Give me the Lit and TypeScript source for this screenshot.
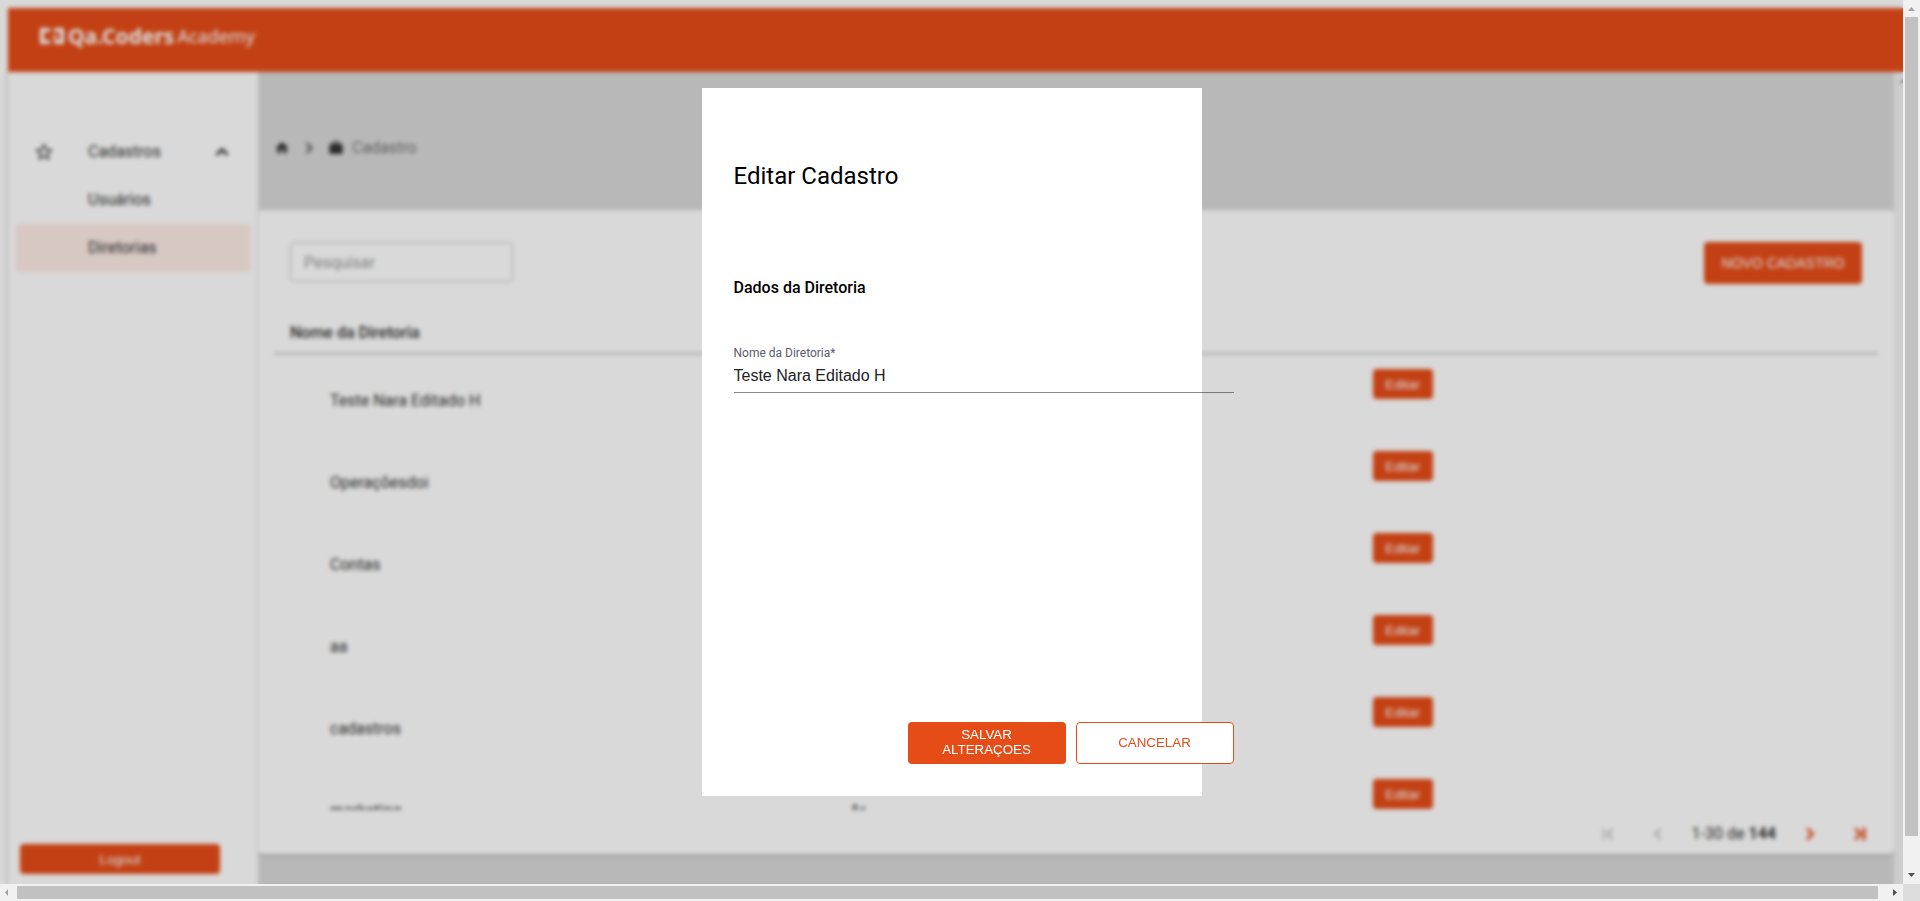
import { LitElement, html, css, svg } from "lit";
import { customElement } from "lit/decorators.js";

const rows = ["Teste Nara Editado H", "Operaçõesdoi", "Contas", "aa", "cadastros", "marketing"];

const icon = (d: string, size = 24, stroke = 0) => html`
  <svg width=${size} height=${size} viewBox="0 0 24 24" aria-hidden="true">
    ${svg`<path d=${d} fill="currentColor" stroke="currentColor" stroke-width=${stroke}></path>`}
  </svg>`;

const STAR = "M22 9.24l-7.19-.62L12 2 9.19 8.63 2 9.24l5.46 4.73L5.82 21 12 17.27 18.18 21l-1.63-7.03L22 9.24zM12 15.4l-3.76 2.27 1-4.28-3.32-2.88 4.38-.38L12 6.1l1.71 4.04 4.38.38-3.32 2.88 1 4.28L12 15.4z";
const UP = "M12 8l-6 6 1.41 1.41L12 10.83l4.59 4.58L18 14z";
const RIGHT = "M10 6L8.59 7.41 13.17 12l-4.58 4.59L10 18l6-6z";
const LEFT = "M15.41 7.41L14 6l-6 6 6 6 1.41-1.41L10.83 12z";
const FIRST = "M17.41 16.59L12.82 12l4.59-4.59L16 6l-6 6 6 6zM7 6h1.500v12H7z";
const LAST = "M6.59 7.41L11.18 12l-4.59 4.59L8 18l6-6-6-6zM15 6h2v12h-2z";
const HOME = "M10 20v-6h4v6h5v-8h3L12 3 2 12h3v8z";
const BAG = "M20 6h-3V4c0-1.11-.89-2-2-2H9c-1.11 0-2 .89-2 2v2H4c-1.11 0-2 .89-2 2v11c0 1.11.89 2 2 2h16c1.11 0 2-.89 2-2V8c0-1.11-.89-2-2-2zm-5 0H9V4h6v2z";

@customElement("app-root")
export class AppRoot extends LitElement {
  static styles = css`
    :host {
      display: grid;
      grid-template: minmax(0, 1fr) 17px / minmax(0, 1fr) 17px;
      height: 100vh;
      overflow: hidden;
      font: 400 16px/24px Roboto, sans-serif;
      color: #333;
    }
    * { box-sizing: border-box; }
    svg { display: block; flex: none; }
    button { font-family: "Liberation Sans", Arial, sans-serif; cursor: pointer; }
    .view { position: relative; overflow: hidden; background: #fff; }
    .app {
      display: grid;
      grid-template: 64px minmax(0, 1fr) / 250px minmax(0, 1fr) 17px;
      height: 100%;
      margin-right: -8px;
      padding: 8px 0 0 8px;
      isolation: isolate;
    }
    .top {
      grid-column: 1 / -1;
      padding: 14px 31px;
      background: #e64c18;
      color: #fff;
      z-index: 1;
    }
    .brand { display: flex; align-items: center; gap: 3px; font: 700 21px/28px "Noto Sans", sans-serif; }
    .brand-sub { font-size: 18px; font-weight: 400; }
    .side {
      display: flex;
      flex-direction: column;
      padding: 56px 8px 10px;
      box-shadow: 0 0 4px rgba(0, 0, 0, 0.35);
      background: #fff;
    }
    .nav { display: flex; flex-direction: column; flex: 1; }
    .nav-item {
      display: grid;
      grid-template-columns: 54px 1fr 24px;
      align-items: center;
      height: 48px;
      padding: 0 16px 0 17px;
      border-radius: 4px;
      color: inherit;
      text-decoration: none;
    }
    .nav-text { grid-column: 2; padding-left: 1px; }
    .active { background: #fdebe6; }
    .solid {
      border: 0;
      border-radius: 4px;
      background: #e64c18;
      color: #fff;
    }
    .logout { width: 200px; height: 30px; margin-left: 4px; }
    .main { display: flex; flex-direction: column; background: #d9d9d9; min-width: 0; z-index: 1; }
    .crumbs {
      display: flex;
      align-items: center;
      height: 138px;
      padding: 14px 16px 0;
      gap: 8px;
      color: #757575;
    }
    .crumbs svg { color: #333; }
    .card {
      flex: 1;
      min-height: 0;
      display: flex;
      flex-direction: column;
      padding: 32px 16px 0;
      background: #fff;
      border-radius: 4px;
      margin-bottom: 30px;
      box-shadow: 0 1px 3px rgba(0, 0, 0, 0.25);
    }
    .tools { display: flex; justify-content: space-between; padding: 0 16px; }
    .search {
      width: 223px;
      height: 40px;
      padding: 0 13px;
      border: 1px solid #c4c4c4;
      border-radius: 4px;
      font: inherit;
    }
    .search::placeholder { color: #999; opacity: 1; }
    .new { width: 158px; height: 42px; font-size: 14px; }
    .table-box { flex: 1; min-height: 0; overflow: hidden; margin-top: 28px; }
    table { width: 100%; border-collapse: separate; border-spacing: 0; table-layout: fixed; }
    th { height: 43px; padding: 2px 16px 0; text-align: left; font-weight: 500; border-bottom: 3px solid #d9d9d9; }
    td { height: 82px; padding: 14px 0 0; vertical-align: top; }
    td.name { padding: 34px 0 0 56px; }
    td.code { padding: 34px 0 0 24px; }
    .edit { display: block; width: 60px; height: 30px; }
    .pager { display: flex; align-items: center; justify-content: flex-end; height: 44px; padding: 4px 6px 0 0; gap: 22px; }
    .steps { display: flex; gap: 26px; }
    .step { padding: 0; border: 0; background: none; color: #e64c18; }
    .step:disabled { color: #bbb; }
    .inner-bar { background: #f1f1f1; z-index: 1; }
    .veil {
      position: absolute;
      inset: 0;
      z-index: 2;
      display: flex;
      justify-content: center;
      align-items: center;
      background: rgba(0, 0, 0, 0.15);
      backdrop-filter: blur(2px);
    }
    .dialog {
      display: flex;
      flex-direction: column;
      width: 500px;
      height: 708px;
      padding: 72px 32px 32px;
      background: #fff;
      color: #000;
    }
    h1 { margin: 0; font-size: 24px; line-height: 32px; font-weight: 400; }
    h2 { margin: 84px 0 0; font-size: 16px; line-height: 24px; font-weight: 500; }
    .field { width: 500px; margin-top: 44px; }
    .field label { display: block; font-size: 12px; line-height: 18px; color: #5c5b6e; }
    .field input {
      display: block;
      width: 100%;
      height: 31px;
      padding: 0 0 2px;
      border: 0;
      border-bottom: 1px solid rgba(0, 0, 0, 0.45);
      background: none;
      outline: 0;
      font: 16px "Liberation Sans", Arial, sans-serif;
      color: #222;
    }
    .actions { display: flex; justify-content: flex-end; gap: 10px; width: 500px; margin-top: auto; }
    .action { width: 158px; height: 42px; padding: 0 24px 2px; border-radius: 4px; line-height: 15px; text-transform: uppercase; }
    .ghost { border: 1px solid #e64c18; background: #fff; color: #e64c18; }
    .bar { display: flex; align-items: center; justify-content: space-between; background: #f1f1f1; color: #505050; }
    .bar-v { flex-direction: column; }
    .thumb { background: #c1c1c1; flex: none; }
    .bar-v .thumb { width: 13px; height: calc(100% - 65px); margin-bottom: auto; }
    .bar-h .thumb { height: 13px; width: calc(100% - 42px); margin-right: auto; }
    .corner { background: #dcdcdc; }
    .dim { color: #a3a3a3; }
  `;

  private arrow(d: string, dim = false) {
    return html`<svg class=${dim ? "dim" : ""} width="17" height="17" viewBox="0 0 17 17" aria-hidden="true">
      <path d=${d} fill="currentColor"></path></svg>`;
  }

  render() {
    return html`
      <div class="view">
        <div class="app">
          <header class="top">
            <div class="brand">
              <svg width="26" height="20" viewBox="0 0 26 20" fill="none" stroke="currentColor" stroke-width="4" aria-hidden="true">
                <path d="M11 4H3V16H11"></path><path d="M15 4H23V16H15"></path><path d="M16 9v4" stroke-width="3"></path>
              </svg>
              <span>Qa.Coders</span>
              <span class="brand-sub">Academy</span>
            </div>
          </header>
          <aside class="side">
            <nav class="nav">
              <a class="nav-item" href="#cadastros">${icon(STAR, 22)}<span class="nav-text">Cadastros</span>${icon(UP, 24, 1)}</a>
              <a class="nav-item" href="#usuarios"><span class="nav-text">Usuários</span></a>
              <a class="nav-item active" href="#diretorias"><span class="nav-text">Diretorias</span></a>
            </nav>
            <button class="solid logout">Logout</button>
          </aside>
          <main class="main">
            <div class="crumbs">
              ${icon(HOME, 16)}${icon(RIGHT, 22)}${icon(BAG, 16)}<span>Cadastro</span>
            </div>
            <section class="card">
              <div class="tools">
                <input class="search" type="search" placeholder="Pesquisar" aria-label="Pesquisar" />
                <button class="solid new">NOVO CADASTRO</button>
              </div>
              <div class="table-box">
                <table>
                  <colgroup><col width="34.4%" /><col width="34.1%" /><col /></colgroup>
                  <thead><tr><th>Nome da Diretoria</th><th></th><th></th></tr></thead>
                  <tbody>
                    ${rows.map((name, i) => html`<tr>
                      <td class="name">${name}</td>
                      <td class="code">${i === 5 ? "Ar" : ""}</td>
                      <td><button class="solid edit">Editar</button></td>
                    </tr>`)}
                  </tbody>
                </table>
              </div>
              <div class="pager">
                <div class="steps">
                  <button class="step" disabled aria-label="Primeira">${icon(FIRST)}</button>
                  <button class="step" disabled aria-label="Anterior">${icon(LEFT)}</button>
                </div>
                <span>1-30 de <b>144</b></span>
                <div class="steps">
                  <button class="step" aria-label="Próxima">${icon(RIGHT, 24, 1)}</button>
                  <button class="step" aria-label="Última">${icon(LAST, 24, 1)}</button>
                </div>
              </div>
            </section>
          </main>
          <div class="inner-bar">${this.arrow("M5 11L8.500 7L12 11Z", true)}</div>
        </div>
        <div class="veil">
          <form class="dialog" role="dialog" aria-labelledby="title">
            <h1 id="title">Editar Cadastro</h1>
            <h2>Dados da Diretoria</h2>
            <div class="field">
              <label for="nome">Nome da Diretoria*</label>
              <input id="nome" type="text" .value=${"Teste Nara Editado H"} />
            </div>
            <div class="actions">
              <button class="solid action" type="button">Salvar Alteraçoes</button>
              <button class="ghost action" type="button">Cancelar</button>
            </div>
          </form>
        </div>
      </div>
      <div class="bar bar-v">
        ${this.arrow("M5 11L8.5 7L12 11Z", true)}<div class="thumb"></div>${this.arrow("M5 6L8.5 10L12 6Z")}
      </div>
      <div class="bar bar-h">
        ${this.arrow("M8 5L5 8.500L8 12Z", true)}<div class="thumb"></div>${this.arrow("M7 5L11 8.500L7 12Z")}
      </div>
      <div class="corner"></div>
    `;
  }
}
